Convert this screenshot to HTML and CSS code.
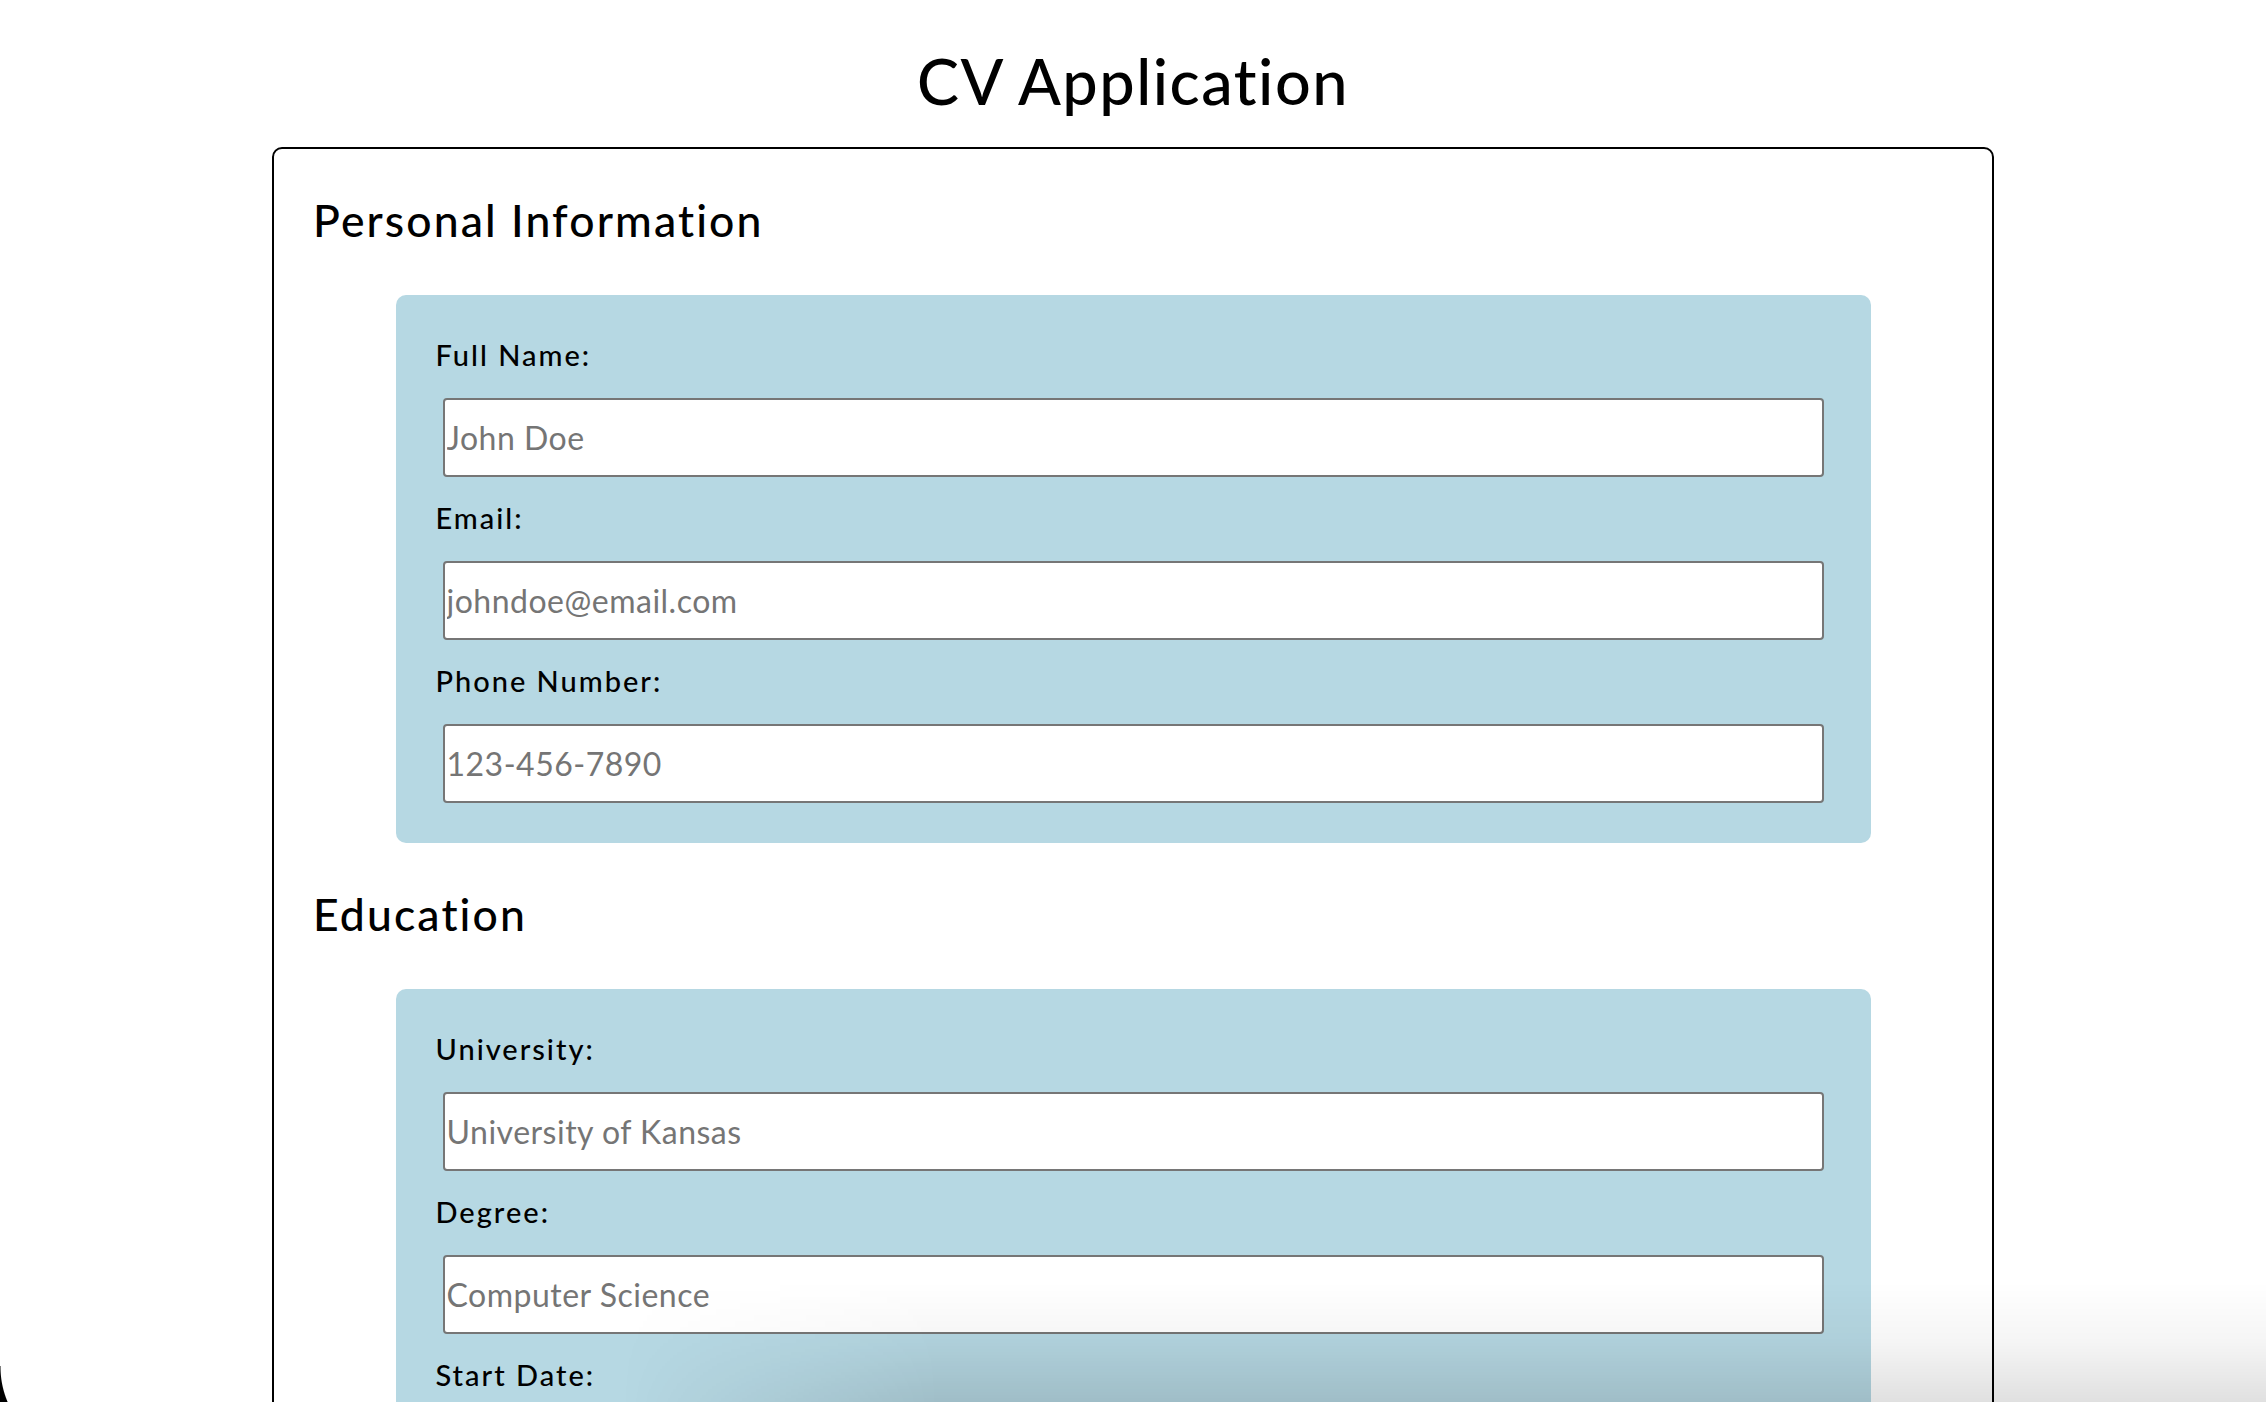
FILE: index.html
```html
<!DOCTYPE html>
<html lang="en">
<head>
<meta charset="utf-8">
<title>CV Application</title>
<link rel="stylesheet" href="styles.css">
</head>
<body>
<div class="page">
  <h1 class="title">CV Application</h1>
  <main class="card">
    <section class="section">
      <h2 class="section-title">Personal Information</h2>
      <div class="panel">
        <div class="field">
          <label class="field-label" for="name">Full Name:</label>
          <input class="field-input" id="name" type="text" placeholder="John Doe">
        </div>
        <div class="field">
          <label class="field-label" for="email">Email:</label>
          <input class="field-input" id="email" type="email" placeholder="johndoe@email.com">
        </div>
        <div class="field">
          <label class="field-label" for="phone">Phone Number:</label>
          <input class="field-input" id="phone" type="tel" placeholder="123-456-7890">
        </div>
      </div>
    </section>
    <section class="section">
      <h2 class="section-title">Education</h2>
      <div class="panel">
        <div class="field">
          <label class="field-label" for="uni">University:</label>
          <input class="field-input" id="uni" type="text" placeholder="University of Kansas">
        </div>
        <div class="field">
          <label class="field-label" for="degree">Degree:</label>
          <input class="field-input" id="degree" type="text" placeholder="Computer Science">
        </div>
        <div class="field">
          <label class="field-label" for="start">Start Date:</label>
          <input class="field-input" id="start" type="text" placeholder="2018">
        </div>
      </div>
    </section>
  </main>
</div>
<div class="shade" aria-hidden="true"></div>
<div class="corner" aria-hidden="true"></div>
</body>
</html>
```

FILE: styles.css
```css
html, body {
  margin: 0;
  padding: 0;
  background: #ffffff;
}

body {
  font-family: "Lato", "Liberation Sans", sans-serif;
  font-variant-ligatures: none;
  color: #000000;
  overflow: hidden;
  height: 1402px;
}

.page {
  padding-top: 43px;
}

.title {
  margin: 0;
  font-size: 63px;
  line-height: 76px;
  font-weight: 500;
  letter-spacing: 1.5px;
  text-align: center;
}

.card {
  box-sizing: border-box;
  width: 1722px;
  margin: 28px auto 0;
  border: 2px solid #000000;
  border-radius: 10px;
  padding-bottom: 44px;
}

.section {
  padding-top: 44px;
}

.section-title {
  margin: 0 0 48px;
  padding-left: 39px;
  font-size: 44.5px;
  line-height: 54px;
  font-weight: 500;
  letter-spacing: 2.1px;
}

.panel {
  box-sizing: border-box;
  width: 1475px;
  margin: 0 auto;
  padding: 42px 40px 40px;
  background: #b6d8e3;
  border-radius: 10px;
}

.field {
  display: flex;
  flex-direction: column;
  align-items: flex-start;
  margin-bottom: 23px;
}

.field:last-child {
  margin-bottom: 0;
}

.field-label {
  display: block;
  font-size: 29px;
  line-height: 35px;
  font-weight: 500;
  letter-spacing: 2px;
  margin-bottom: 26px;
}

.field-input {
  box-sizing: border-box;
  width: 1381px;
  height: 79px;
  margin: 0 0 0 7px;
  padding: 0 2px;
  border: 2px solid #767676;
  border-radius: 4px;
  background: #ffffff;
  font-family: "Lato", "Liberation Sans", sans-serif;
  font-variant-ligatures: none;
  font-size: 32px;
  letter-spacing: 0.5px;
  color: #000000;
  outline: none;
}

.field-input::placeholder {
  color: #757575;
  opacity: 1;
}

.shade {
  position: fixed;
  left: 620px;
  right: 0;
  bottom: 0;
  height: 120px;
  pointer-events: none;
  background: linear-gradient(to bottom, rgba(0, 0, 0, 0) 0%, rgba(0, 0, 0, 0.04) 50%, rgba(0, 0, 0, 0.12) 100%);
  -webkit-mask-image: linear-gradient(to right, transparent 0, #000 320px);
  mask-image: linear-gradient(to right, transparent 0, #000 320px);
}

.corner {
  position: fixed;
  left: 0;
  bottom: 0;
  width: 12px;
  height: 36px;
  pointer-events: none;
  background: radial-gradient(circle 90px at 90px 1px, transparent 89px, #000000 90px);
}
```
